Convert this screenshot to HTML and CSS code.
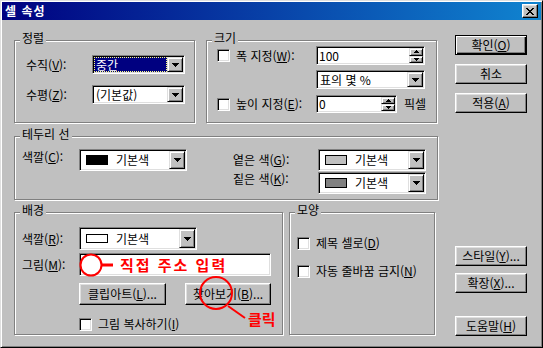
FILE: index.html
```
<!DOCTYPE html>
<html lang="ko">
	<head>
		<meta charset="utf-8">
		<title>셀 속성</title>
		<link rel="stylesheet" href="styles.css">
	</head>
	<body>
		<div class="window">
			<div class="titlebar">
				<span class="title">셀 속성</span>
				<span class="close"><svg width="8" height="7"><path d="M0 0h2v1h-2zM6 0h2v1h-2zM1 1h2v1h-2zM5 1h2v1h-2zM2 2h4v1h-4zM3 3h2v1h-2zM2 4h4v1h-4zM1 5h2v1h-2zM5 5h2v1h-2zM0 6h2v1h-2zM6 6h2v1h-2z"/></svg></span>
			</div>
			<div class="content">
				<div class="main">
					<div class="line">
						<!-- 정렬 -->
						<div class="group g-align">
							<div class="legend">정렬</div>
							<div class="row al-row1">
								<span class="al-lbl">수직(<u>V</u>):</span>
								<div class="combo al-combo">
									<span class="ctext sel"><span class="focus">중간</span></span>
									<span class="dropbtn"><svg width="7" height="4"><path d="M0 0h7v1h-7zM1 1h5v1h-5zM2 2h3v1h-3zM3 3h1v1h-1z"/></svg></span>
								</div>
							</div>
							<div class="row al-row2">
								<span class="al-lbl">수평(<u>Z</u>):</span>
								<div class="combo al-combo">
									<span class="ctext">(기본값)</span>
									<span class="dropbtn"><svg width="7" height="4"><path d="M0 0h7v1h-7zM1 1h5v1h-5zM2 2h3v1h-3zM3 3h1v1h-1z"/></svg></span>
								</div>
							</div>
						</div>
						<!-- 크기 -->
						<div class="group g-size">
							<div class="legend">크기</div>
							<div class="row sz-row1">
								<span class="check"></span>
								<span class="sz-lbl">폭 지정(<u>W</u>):</span>
								<div class="field sz-w">
									<span class="ftext">100</span>
									<span class="spin">
										<span><svg width="5" height="3"><path d="M2 0h1v1h-1zM1 1h3v1h-3zM0 2h5v1h-5z"/></svg></span>
										<span><svg width="5" height="3"><path d="M0 0h5v1h-5zM1 1h3v1h-3zM2 2h1v1h-1z"/></svg></span>
									</span>
								</div>
							</div>
							<div class="row sz-row2">
								<div class="combo sz-unit">
									<span class="ctext">표의 몇 %</span>
									<span class="dropbtn"><svg width="7" height="4"><path d="M0 0h7v1h-7zM1 1h5v1h-5zM2 2h3v1h-3zM3 3h1v1h-1z"/></svg></span>
								</div>
							</div>
							<div class="row sz-row3">
								<span class="check"></span>
								<span class="sz-lbl">높이 지정(<u>E</u>):</span>
								<div class="field sz-h">
									<span class="ftext">0</span>
									<span class="spin">
										<span><svg width="5" height="3"><path d="M2 0h1v1h-1zM1 1h3v1h-3zM0 2h5v1h-5z"/></svg></span>
										<span><svg width="5" height="3"><path d="M0 0h5v1h-5zM1 1h3v1h-3zM2 2h1v1h-1z"/></svg></span>
									</span>
								</div>
								<span class="unit">픽셀</span>
							</div>
						</div>
					</div>

					<!-- 테두리 선 -->
					<div class="group g-border">
						<div class="legend">테두리 선</div>
						<div class="row bd-row">
							<span class="bd-lbl">색깔(<u>C</u>):</span>
							<div class="combo color-combo bd-combo">
								<span class="ctext"><span class="swatch sw-black"></span>기본색</span>
								<span class="dropbtn"><svg width="7" height="4"><path d="M0 0h7v1h-7zM1 1h5v1h-5zM2 2h3v1h-3zM3 3h1v1h-1z"/></svg></span>
							</div>
							<div class="bd-shades">
								<span>옅은 색(<u>G</u>):</span>
								<div class="combo color-combo">
									<span class="ctext"><span class="swatch sw-light"></span>기본색</span>
									<span class="dropbtn"><svg width="7" height="4"><path d="M0 0h7v1h-7zM1 1h5v1h-5zM2 2h3v1h-3zM3 3h1v1h-1z"/></svg></span>
								</div>
								<span class="shade-dark">짙은 색(<u>K</u>):</span>
								<div class="combo color-combo">
									<span class="ctext"><span class="swatch sw-dark"></span>기본색</span>
									<span class="dropbtn"><svg width="7" height="4"><path d="M0 0h7v1h-7zM1 1h5v1h-5zM2 2h3v1h-3zM3 3h1v1h-1z"/></svg></span>
								</div>
							</div>
						</div>
					</div>

					<div class="line line-bottom">
						<!-- 배경 -->
						<div class="group g-bg">
							<div class="legend">배경</div>
							<div class="row bg-row1">
								<span class="bg-lbl">색깔(<u>R</u>):</span>
								<div class="combo color-combo bg-combo">
									<span class="ctext"><span class="swatch sw-white"></span>기본색</span>
									<span class="dropbtn"><svg width="7" height="4"><path d="M0 0h7v1h-7zM1 1h5v1h-5zM2 2h3v1h-3zM3 3h1v1h-1z"/></svg></span>
								</div>
							</div>
							<div class="row bg-row2">
								<span class="bg-lbl">그림(<u>M</u>):</span>
								<div class="field bg-pic"></div>
							</div>
							<div class="row bg-row3">
								<span class="btn bg-btn1">클립아트(<u>L</u>)...</span>
								<span class="btn bg-btn2">찾아보기(<u>B</u>)...</span>
							</div>
							<div class="row bg-row4">
								<span class="check"></span>
								<span>그림 복사하기(<u>I</u>)</span>
							</div>
							<!-- 빨간 표시 -->
							<svg class="marks" width="267" height="121">
								<circle cx="76" cy="52" r="10.5"/>
								<line x1="87" y1="52" x2="98" y2="52" class="thick"/>
								<circle cx="201" cy="80" r="16"/>
								<line x1="213" y1="93" x2="230" y2="105"/>
							</svg>
							<span class="note note-addr">직접 주소 입력</span>
							<span class="note note-click">클릭</span>
						</div>
						<!-- 모양 -->
						<div class="group g-shape">
							<div class="legend">모양</div>
							<div class="row sh-row1">
								<span class="check"></span>
								<span>제목 셀로(<u>D</u>)</span>
							</div>
							<div class="row sh-row2">
								<span class="check"></span>
								<span>자동 줄바꿈 금지(<u>N</u>)</span>
							</div>
						</div>
					</div>
				</div>

				<div class="side">
					<span class="btn default">확인(<u>O</u>)</span>
					<span class="btn">취소</span>
					<span class="btn">적용(<u>A</u>)</span>
					<span class="btn btn-style">스타일(<u>Y</u>)...</span>
					<span class="btn btn-ext">확장(<u>X</u>)...</span>
					<span class="btn btn-help">도움말(<u>H</u>)</span>
				</div>
			</div>
		</div>
	</body>
</html>
```

FILE: styles.css
```
body{
	margin: 0;
	background-color: #c0c0c0;
	font-family: "Noto Sans CJK KR", "Noto Sans", sans-serif;
	font-size: 12px;
	line-height: 14px;
	color: #000;
}

u{
	text-decoration-thickness: 1px;
	text-underline-offset: 1px;
}

.window{
	width: 543px;
	height: 348px;
	box-sizing: border-box;
	background-color: #c0c0c0;
	border: 1px solid;
	border-color: #dfdfdf #000 #000 #dfdfdf;
	padding: 1px;
	box-shadow: inset 1px 1px #fff, inset -1px -1px #808080;
}

.titlebar{
	height: 18px;
	display: flex;
	align-items: center;
	justify-content: space-between;
	padding: 0 3px 0 3px;
	background: linear-gradient(90deg, #000080, #1084d0);
	color: #fff;
}

.title{
	font-weight: bold;
	letter-spacing: 1px;
}

.close{
	width: 16px;
	height: 14px;
	box-sizing: border-box;
	display: flex;
	align-items: center;
	justify-content: center;
	background-color: #c0c0c0;
	border: 1px solid;
	border-color: #fff #000 #000 #fff;
	box-shadow: inset -1px -1px #808080, inset 1px 1px #dfdfdf;
}

svg path{
	fill: #000;
}

.content{
	display: flex;
}

.main{
	width: 424px;
	margin-left: 12px;
	padding-top: 20px;
}

.side{
	width: 72px;
	margin-left: 17px;
	padding-top: 15px;
	display: flex;
	flex-direction: column;
}

.line{
	display: flex;
}

/* group boxes */
.group{
	box-sizing: border-box;
	border: 1px solid #808080;
	box-shadow: inset 1px 1px #fff, 1px 1px #fff;
}

.legend{
	display: table;
	margin: -10px 0 0 5px;
	padding: 0 2px;
	line-height: 14px;
	background-color: #c0c0c0;
}

.row{
	display: flex;
	align-items: center;
	white-space: nowrap;
}

/* controls */
.combo, .field{
	display: flex;
	box-sizing: border-box;
	background-color: #fff;
	border: 1px solid;
	border-color: #808080 #fff #fff #808080;
	box-shadow: inset 1px 1px #000, inset -1px -1px #dfdfdf;
	padding: 1px;
}

.ctext{
	flex: 1;
	display: flex;
	align-items: center;
	padding-left: 2px;
	white-space: nowrap;
}

.ctext.sel{
	background-color: #000080;
	color: #fff;
	outline: 1px dotted #ffff80;
	outline-offset: -1px;
}

.dropbtn{
	width: 16px;
	box-sizing: border-box;
	display: flex;
	align-items: center;
	justify-content: center;
	background-color: #c0c0c0;
	border: 1px solid;
	border-color: #dfdfdf #000 #000 #dfdfdf;
	box-shadow: inset 1px 1px #fff, inset -1px -1px #808080;
}

.ftext{
	flex: 1;
	padding-left: 1px;
	display: flex;
	align-items: center;
}

.spin{
	width: 14px;
	display: flex;
	flex-direction: column;
}

.spin span{
	flex: 1;
	box-sizing: border-box;
	display: flex;
	align-items: center;
	justify-content: center;
	background-color: #c0c0c0;
	border: 1px solid;
	border-color: #dfdfdf #000 #000 #dfdfdf;
	box-shadow: inset 1px 1px #fff, inset -1px -1px #808080;
}

.check{
	flex: none;
	width: 13px;
	height: 13px;
	box-sizing: border-box;
	margin-right: 6px;
	background-color: #fff;
	border: 1px solid;
	border-color: #808080 #fff #fff #808080;
	box-shadow: inset 1px 1px #000, inset -1px -1px #dfdfdf;
}

.btn{
	display: flex;
	align-items: center;
	justify-content: center;
	height: 20px;
	box-sizing: border-box;
	white-space: nowrap;
	background-color: #c0c0c0;
	border: 1px solid;
	border-color: #fff #000 #000 #fff;
	box-shadow: inset -1px -1px #808080, inset 1px 1px #dfdfdf;
}

.btn.default{
	border-color: #000;
	box-shadow: inset 1px 1px #fff, inset -1px -1px #000, inset -2px -2px #808080;
}

.swatch{
	flex: none;
	width: 22px;
	height: 10px;
	box-sizing: border-box;
	margin: 0 8px 0 3px;
	border: 1px solid #000;
}

.sw-black{ background-color: #000; }
.sw-light{ background-color: #c0c0c0; }
.sw-dark{ background-color: #808080; }
.sw-white{ background-color: #fff; height: 9px; }

/* 정렬 */
.g-align{
	width: 181px;
	height: 83px;
	margin-right: 11px;
}

.g-align .row{ margin-left: 11px; }
.al-row1{ margin-top: 10px; }
.al-row2{ margin-top: 11px; }
.al-lbl{ width: 66px; }

.al-combo{
	width: 93px;
	height: 19px;
}

/* 크기 */
.g-size{
	width: 231px;
	height: 83px;
}

.g-size .row{ margin-left: 10px; }
.sz-row1{ margin-top: 1px; }
.g-size .sz-row2{ margin: 5px 0 0 109px; }
.sz-row3{ margin-top: 6px; }
.sz-lbl{ width: 80px; }

.sz-w{
	width: 109px;
	height: 19px;
}

.sz-unit{
	width: 109px;
	height: 19px;
}

.sz-h{
	width: 81px;
	height: 18px;
}

.unit{ margin-left: 7px; }

/* 테두리 선 */
.g-border{
	width: 424px;
	height: 64px;
	margin-top: 13px;
}

.bd-row{
	margin: 8px 0 0 7px;
	align-items: flex-start;
}

.bd-lbl{
	width: 57px;
	margin-top: 1px;
}

.color-combo{
	width: 108px;
	height: 22px;
}

.bd-shades{
	margin-left: 46px;
	display: grid;
	grid-template-columns: 85px 108px;
	row-gap: 1px;
	align-items: center;
}

.shade-dark{ margin-bottom: 8px; }

/* 배경 */
.line-bottom{ margin-top: 12px; }

.g-bg{
	position: relative;
	width: 269px;
	height: 123px;
	margin-right: 6px;
}

.g-bg .row{ margin-left: 7px; }
.bg-row1{ margin-top: 10px; }
.bg-row2{ margin-top: 3px; }
.g-bg .bg-row3{ margin: 7px 0 0 64px; }
.g-bg .bg-row4{ margin: 12px 0 0 64px; }
.bg-lbl{ width: 57px; }

.bg-combo{
	width: 118px;
	height: 23px;
}

.bg-pic{
	width: 192px;
	height: 23px;
}

.bg-btn1{
	width: 87px;
	height: 22px;
}

.bg-btn2{
	width: 86px;
	height: 22px;
	margin-left: 19px;
}

.marks{
	position: absolute;
	left: 0;
	top: 0;
	overflow: visible;
}

.marks circle, .marks line{
	fill: none;
	stroke: #f00;
	stroke-width: 2;
}

.marks .thick{ stroke-width: 3; }

.note{
	position: absolute;
	color: #f00;
	font-weight: bold;
	font-size: 15px;
	line-height: 16px;
	letter-spacing: 2px;
	white-space: nowrap;
}

.note-addr{
	left: 105px;
	top: 44px;
}

.note-click{
	left: 233px;
	top: 98px;
	letter-spacing: 0;
}

/* 모양 */
.g-shape{
	width: 146px;
	height: 123px;
}

.g-shape .row{ margin-left: 7px; }
.sh-row1{ margin-top: 19px; }
.sh-row2{ margin-top: 14px; }

/* 오른쪽 버튼 */
.side .btn + .btn{ margin-top: 9px; }
.side .btn + .btn-style{ margin-top: 133px; }
.side .btn + .btn-ext{ margin-top: 7px; }
.side .btn + .btn-help{ margin-top: 23px; }
```
